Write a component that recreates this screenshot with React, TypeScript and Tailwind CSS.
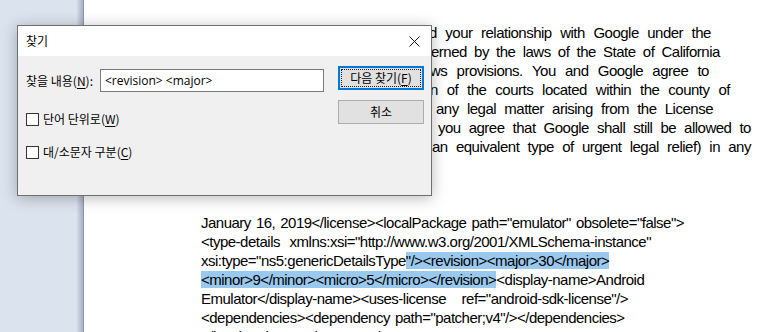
import React from 'react';

const DOC_FONT = "font-['Liberation_Sans',Arial,sans-serif]";
const UI_FONT = "font-['Noto_Sans_CJK_KR','Noto_Sans',sans-serif]";

// visible tail of each license line; the start of the line sits under the dialog
const upper: { words: string[]; start: number; end: number }[] = [
  { words: ['d', 'your', 'relationship', 'with', 'Google', 'under', 'the'], start: 429, end: 711 },
  { words: ['erned', 'by', 'the', 'laws', 'of', 'the', 'State', 'of', 'California'], start: 431, end: 720 },
  { words: ['ws', 'provisions.', 'You', 'and', 'Google', 'agree', 'to'], start: 430, end: 709 },
  { words: ['n', 'of', 'the', 'courts', 'located', 'within', 'the', 'county', 'of'], start: 430, end: 730 },
  { words: ['any', 'legal', 'matter', 'arising', 'from', 'the', 'License'], start: 436, end: 713 },
  { words: ['you', 'agree', 'that', 'Google', 'shall', 'still', 'be', 'allowed', 'to'], start: 438, end: 751 },
  { words: ['an', 'equivalent', 'type', 'of', 'urgent', 'legal', 'relief)', 'in', 'any'], start: 432, end: 751 },
];

function Mn({ k }: { k: string }) {
  return (
    <>
      (<span className="underline underline-offset-2">{k}</span>)
    </>
  );
}

function CheckRow({ label, k }: { label: string; k: string }) {
  return (
    <div className="flex items-center gap-[4px]">
      <span className="h-[13px] w-[13px] border border-[#333333] bg-white" />
      <span className="text-[12px] leading-[16px] text-black">
        {label}
        <Mn k={k} />
      </span>
    </div>
  );
}

function FindDialog() {
  return (
    <div
      className={`absolute left-[17px] top-[25px] flex h-[171px] w-[415px] flex-col border border-[#6f6f6f] bg-[#f0f0f0] shadow-[0_2px_14px_rgba(0,0,0,0.28)] ${UI_FONT}`}
    >
      <div className="flex h-[30px] items-center justify-between bg-white pl-[8px] pr-[11px]">
        <span className="text-[12px] text-black">찾기</span>
        <svg width="11" height="11" viewBox="0 0 11 11" className="text-[#111]">
          <path d="M0.5 0.5 L10.5 10.5 M10.5 0.5 L0.5 10.5" stroke="currentColor" strokeWidth="1" />
        </svg>
      </div>
      <div className="flex flex-1 pl-[8px]">
        <div className="flex w-[298px] flex-col pt-[13px]">
          <div className="flex items-center">
            <span className="w-[74px] whitespace-nowrap text-[12px] leading-[16px] text-black">
              찾을 내용<Mn k="N" />:
            </span>
            <div className="flex h-[23px] w-[224px] items-center border border-[#7a7a7a] bg-white px-[4px] font-['Open_Sans','Noto_Sans',sans-serif] text-[12px] text-black">
              &lt;revision&gt; &lt;major&gt;
            </div>
          </div>
          <div className="mt-[19px] flex flex-col gap-[17px]">
            <CheckRow label="단어 단위로" k="W" />
            <CheckRow label="대/소문자 구분" k="C" />
          </div>
        </div>
        <div className="ml-[14px] flex flex-col gap-[10px] pt-[10px]">
          <button className="flex h-[24px] w-[86px] items-center justify-center border-2 border-[#0078d7] bg-[#e1e1e1] p-[1px]">
            <span className="flex h-full w-full items-center justify-center border border-dotted border-[#222] text-[12px] leading-[16px] text-black">
              다음 찾기<Mn k="F" />
            </span>
          </button>
          <button className="flex h-[24px] w-[86px] items-center justify-center border border-[#adadad] bg-[#e1e1e1] text-[12px] leading-[16px] text-black">
            취소
          </button>
        </div>
      </div>
    </div>
  );
}

export default function App() {
  return (
    <div className="relative flex h-[332px] w-[762px] overflow-hidden bg-white">
      <div className="flex w-[84px] shrink-0 bg-[#dbe3ee]">
        <div className="ml-auto w-[6px] bg-gradient-to-r from-[#d4dcea] to-[#a7b1c4]" />
        <div className="w-px bg-[#8e98ac]" />
      </div>
      <div className={`flex-1 pl-[117px] pt-[23px] text-[15px] leading-[19px] tracking-[-0.5px] text-black ${DOC_FONT}`}>
        {upper.map((l, i) => (
          <div key={i} className="flex">
            <span
              className="flex justify-between gap-[4px] whitespace-nowrap"
              style={{ marginLeft: l.start - 201, width: l.end - l.start }}
            >
              {l.words.map((w, j) => (
                <span key={j}>{w}</span>
              ))}
            </span>
          </div>
        ))}
        <div className="mt-[57px] w-[472px]">
          <div className="flex justify-between gap-[5px] whitespace-nowrap">
            <span>January</span>
            <span>16,</span>
            <span>2019&lt;/license&gt;&lt;localPackage</span>
            <span>path="emulator"</span>
            <span>obsolete="false"&gt;</span>
          </div>
          <div className="flex w-[450px] justify-between gap-[5px] whitespace-nowrap">
            <span>&lt;type-details</span>
            <span>xmlns:xsi="http://www.w3.org/2001/XMLSchema-instance"</span>
          </div>
          <div className="whitespace-nowrap">
            xsi:type="ns5:genericDetailsType
            <span className="bg-[#99c9ef]">"/&gt;&lt;revision&gt;&lt;major&gt;30&lt;/major&gt;</span>
          </div>
          <div className="whitespace-nowrap">
            <span className="bg-[#99c9ef]">&lt;minor&gt;9&lt;/minor&gt;&lt;micro&gt;5&lt;/micro&gt;&lt;/revision&gt;</span>
            &lt;display-name&gt;Android
          </div>
          <div className="flex w-[427px] justify-between gap-[5px] whitespace-nowrap">
            <span>Emulator&lt;/display-name&gt;&lt;uses-license</span>
            <span>ref="android-sdk-license"/&gt;</span>
          </div>
          <div className="flex w-[421px] justify-between gap-[5px] whitespace-nowrap">
            <span>&lt;dependencies&gt;&lt;dependency</span>
            <span>path="patcher;v4"/&gt;&lt;/dependencies&gt;</span>
          </div>
          <div className="h-[10px] overflow-hidden whitespace-nowrap">&lt;/localPackage&gt;&lt;/ns2:repository&gt;</div>
        </div>
      </div>
      <FindDialog />
    </div>
  );
}
